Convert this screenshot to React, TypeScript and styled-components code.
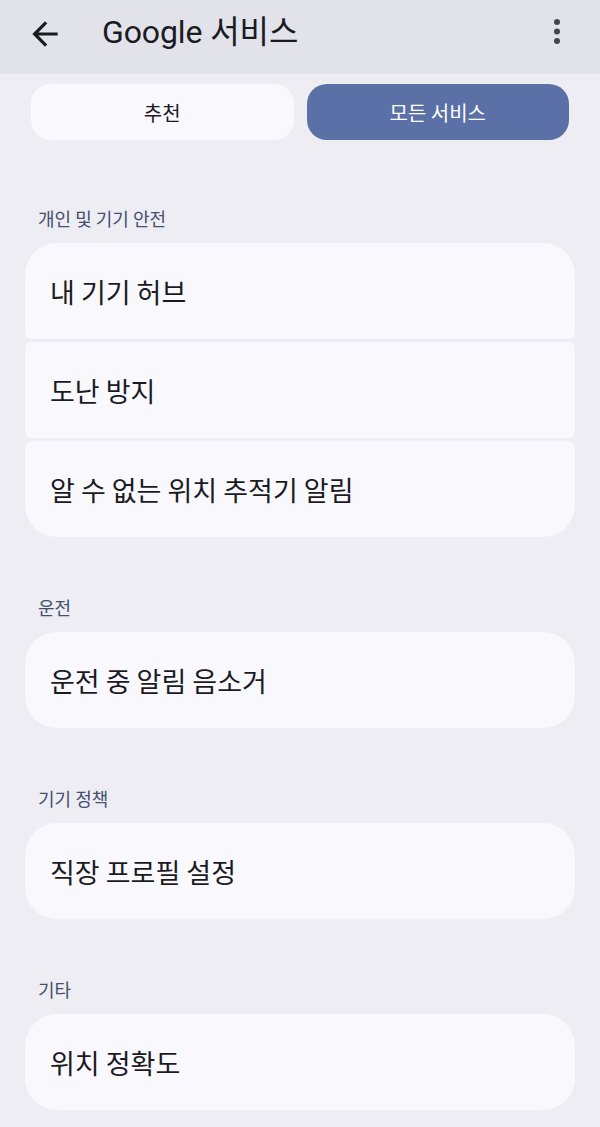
import React from 'react';
import styled, { createGlobalStyle } from 'styled-components';

const GlobalStyle = createGlobalStyle`
    html, body {
        margin: 0;
        padding: 0;
        background: #ededf3;
    }
    body {
        font-family: "Noto Sans CJK KR", "Noto Sans", sans-serif;
        color: #1b1b1f;
    }
`;

const Page = styled.div`
    width: 600px;
    min-height: 1127px;
    background: #ededf3;
`;

const TopBar = styled.header`
    display: flex;
    align-items: center;
    height: 74px;
    padding: 0 31px 6px 26px;
    background: #e2e2ea;
    box-sizing: border-box;
`;

const IconButton = styled.div`
    display: flex;
    align-items: center;
    justify-content: center;
    color: #1b1b1f;
`;

const Title = styled.h1`
    flex: 1;
    margin: 0 0 4px 38px;
    font-family: Roboto, "Noto Sans CJK KR", sans-serif;
    font-size: 32px;
    font-weight: 400;
    line-height: 40px;
    letter-spacing: -0.1px;
    color: #1b1b1f;
`;

const Content = styled.main`
    padding: 10px 25px 20px;
`;

const TabRow = styled.div`
    display: grid;
    grid-template-columns: 1fr 1fr;
    gap: 13px;
    padding: 0 6px;
`;

const Tab = styled.div<{ $active?: boolean }>`
    display: flex;
    align-items: center;
    justify-content: center;
    height: 56px;
    border-radius: 20px;
    font-size: 20px;
    background: ${p => p.$active ? '#5a70a7' : '#f8f8fd'};
    color: ${p => p.$active ? '#ffffff' : '#1b1b1f'};
`;

const Section = styled.section<{ $first?: boolean }>`
    margin-top: ${p => p.$first ? '66px' : '58px'};
`;

const SectionLabel = styled.div`
    padding-left: 13px;
    margin-bottom: 13px;
    font-size: 18px;
    line-height: 24px;
    color: #44506c;
`;

const Group = styled.div`
    display: flex;
    flex-direction: column;
    gap: 3px;
`;

const Item = styled.div`
    display: flex;
    align-items: center;
    height: 96px;
    padding: 0 25px;
    background: #f8f8fd;
    border-radius: 6px;
    font-size: 27px;
    color: #1b1b1f;

    &:first-child {
        border-top-left-radius: 32px;
        border-top-right-radius: 32px;
    }
    &:last-child {
        border-bottom-left-radius: 32px;
        border-bottom-right-radius: 32px;
    }
`;

const sections = [
    { title: '개인 및 기기 안전', items: ['내 기기 허브', '도난 방지', '알 수 없는 위치 추적기 알림'] },
    { title: '운전', items: ['운전 중 알림 음소거'] },
    { title: '기기 정책', items: ['직장 프로필 설정'] },
    { title: '기타', items: ['위치 정확도'] },
];

const BackArrow = () => (
    <svg width="38" height="38" viewBox="0 0 24 24" fill="currentColor">
        <path d="M20 11H7.83l5.59-5.59L12 4l-8 8 8 8 1.41-1.41L7.83 13H20v-2z" />
    </svg>
);

const MoreVert = () => (
    <svg width="24" height="36" viewBox="0 0 24 36" fill="#44464f">
        <circle cx="12" cy="8" r="3" />
        <circle cx="12" cy="17.5" r="3" />
        <circle cx="12" cy="27" r="3" />
    </svg>
);

const App = () => {
    return (
        <Page>
            <GlobalStyle />
            <TopBar>
                <IconButton><BackArrow /></IconButton>
                <Title>Google 서비스</Title>
                <IconButton style={{ marginTop: '-4px' }}><MoreVert /></IconButton>
            </TopBar>
            <Content>
                <TabRow>
                    <Tab>추천</Tab>
                    <Tab $active>모든 서비스</Tab>
                </TabRow>
                {sections.map((section, i) => (
                    <Section key={section.title} $first={i === 0}>
                        <SectionLabel>{section.title}</SectionLabel>
                        <Group>
                            {section.items.map(item => (
                                <Item key={item}>{item}</Item>
                            ))}
                        </Group>
                    </Section>
                ))}
            </Content>
        </Page>
    );
};

export default App;
